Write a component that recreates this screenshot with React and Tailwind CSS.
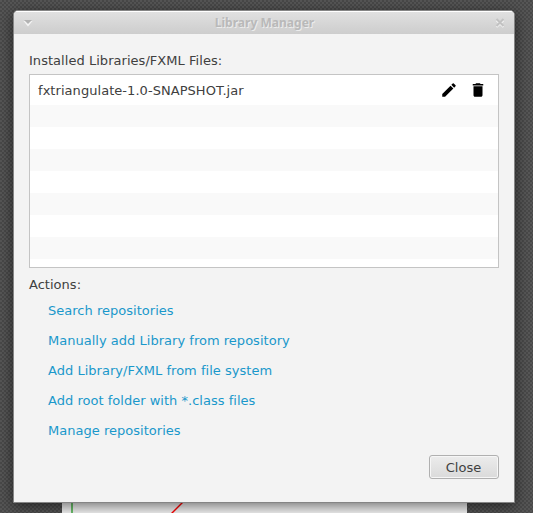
const actions = [
  'Search repositories',
  'Manually add Library from repository',
  'Add Library/FXML from file system',
  'Add root folder with *.class files',
  'Manage repositories',
];

const emptyRows = [
  'h-[22px] bg-[#f9f9f9]',
  'h-[22px] bg-white',
  'h-[22px] bg-[#f9f9f9]',
  'h-[22px] bg-white',
  'h-[22px] bg-[#f9f9f9]',
  'h-[22px] bg-white',
  'h-[22px] bg-[#f9f9f9]',
  'h-2 bg-white',
];

function TitleBar() {
  return (
    <header className="flex h-[23px] items-center justify-between border-t border-white bg-gradient-to-b from-[#e0e0e0] to-[#cdcdcd] pr-[9px] pl-[9px]">
      <svg width="10" height="8" viewBox="0 0 10 8">
        <path d="M0.5 2 L5 7.5 L9.5 2 Z" fill="#f4f4f4" />
        <path d="M1 1 H9 L5 5 Z" fill="#b3b3b3" />
      </svg>
      <h1 className="ml-px font-['Noto_Sans','Open_Sans',sans-serif] text-[12px] leading-[20px] font-bold whitespace-nowrap text-[#b9b9b9] [text-shadow:1px_1px_0_#ececec]">
        Library Manager
      </h1>
      <svg width="10" height="10" viewBox="0 0 10 10" fill="none" strokeWidth="2">
        <path d="M1.5 2.5 L8.5 9 M8.5 2.5 L1.5 9" stroke="#f2f2f2" />
        <path d="M1.5 1 L8.5 8 M8.5 1 L1.5 8" stroke="#c2c2c2" />
      </svg>
    </header>
  );
}

function LibraryList() {
  return (
    <div className="h-[194px] overflow-hidden border border-[#c4c4c4] bg-white">
      <div className="flex h-[30px] items-center pr-[11px] pl-2">
        <span className="flex-1 tracking-[0.05px]">fxtriangulate-1.0-SNAPSHOT.jar</span>
        <svg className="mr-[11px]" width="18" height="18" viewBox="0 0 24 24" fill="#000">
          <path d="M3 17.25V21h3.75L17.81 9.94l-3.75-3.75L3 17.25zM20.71 7.04a1 1 0 0 0 0-1.41l-2.34-2.34a1 1 0 0 0-1.41 0l-1.83 1.83 3.75 3.75 1.83-1.83z" />
        </svg>
        <svg width="18" height="18" viewBox="0 0 24 24" fill="#000">
          <path d="M6 19c0 1.1.9 2 2 2h8c1.1 0 2-.9 2-2V7H6v12zM19 4h-3.5l-1-1h-5l-1 1H5v2h14V4z" />
        </svg>
      </div>
      {emptyRows.map((row, i) => (
        <div key={i} className={row} />
      ))}
    </div>
  );
}

export default function App() {
  return (
    <div className="relative h-[513px] w-[533px] overflow-hidden bg-[#4e4e4e] bg-[conic-gradient(#484848_25%,#565656_0_50%,#484848_0_75%,#565656_0)] bg-[length:4px_4px] pt-[10px] pl-[13px] font-['DejaVu_Sans',sans-serif] text-[13px] leading-[15px] tracking-[0.02px] text-[#404040]">
      <div className="absolute top-[490px] left-[62px] h-[23px] w-[405px] bg-[#f2f2f2]">
        <svg width="405" height="23" viewBox="0 0 405 23">
          <rect x="9" width="2" height="23" fill="#6cc06c" />
          <path d="M109.5 23.5 L121.5 11.5" stroke="#ff0000" strokeWidth="1.4" />
        </svg>
      </div>

      <main className="relative flex h-[493px] w-[502px] flex-col rounded-t-[5px] border border-[#858585] bg-[#f3f3f3] shadow-[0_3px_14px_rgba(0,0,0,0.55)]">
        <div className="overflow-hidden rounded-t-[4px]">
          <TitleBar />
        </div>
        <div className="px-[15px] pt-[19px]">
          <h2 className="mb-[6px] tracking-[0.04px]">Installed Libraries/FXML Files:</h2>
          <LibraryList />
          <h2 className="mt-[9px]">Actions:</h2>
          <ul className="mt-[11px] ml-[19px] flex flex-col gap-[15px] text-[#1a98cb]">
            {actions.map((label) => (
              <li key={label}>
                <a>{label}</a>
              </li>
            ))}
          </ul>
          <div className="mt-[17px] flex justify-end">
            <button className="h-6 w-[70px] rounded-[3px] border border-[#b0b0b0] bg-gradient-to-b from-[#ececec] to-[#dadada] pr-px shadow-[inset_0_0_0_1px_#f6f6f6]">
              Close
            </button>
          </div>
        </div>
      </main>
    </div>
  );
}
